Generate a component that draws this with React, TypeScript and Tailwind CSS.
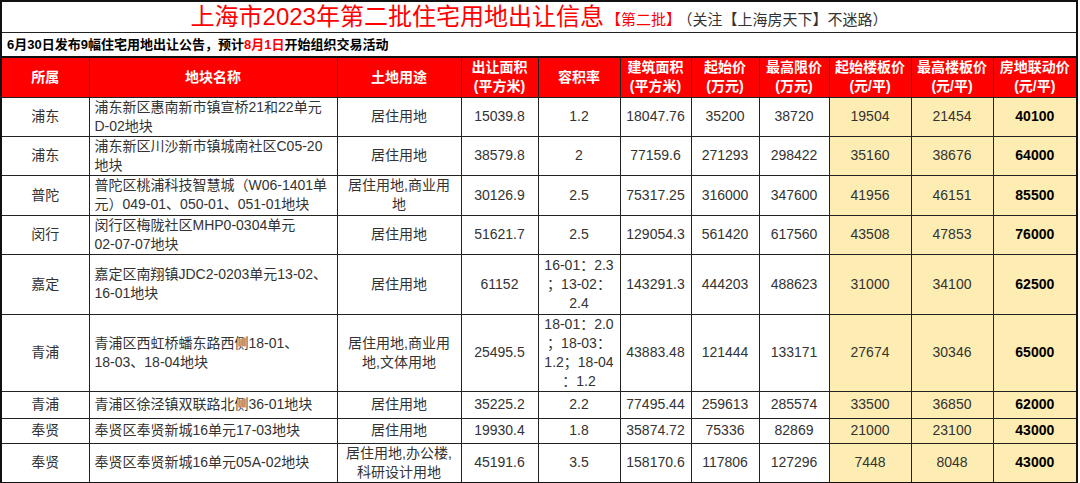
import React from "react";

type Row = {
  area: string;
  name: React.ReactNode;
  use: React.ReactNode;
  size: string;
  ratio: React.ReactNode;
  build: string;
  start: string;
  max: string;
  floorStart: string;
  floorMax: string;
  linked: string;
  h: string;
};

const rows: Row[] = [
  {
    area: "浦东",
    name: (<>浦东新区惠南新市镇宣桥21和22单元<br />D-02地块</>),
    use: "居住用地",
    size: "15039.8",
    ratio: "1.2",
    build: "18047.76",
    start: "35200",
    max: "38720",
    floorStart: "19504",
    floorMax: "21454",
    linked: "40100",
    h: "h-[38px]",
  },
  {
    area: "浦东",
    name: (<>浦东新区川沙新市镇城南社区C05-20<br />地块</>),
    use: "居住用地",
    size: "38579.8",
    ratio: "2",
    build: "77159.6",
    start: "271293",
    max: "298422",
    floorStart: "35160",
    floorMax: "38676",
    linked: "64000",
    h: "h-[39px]",
  },
  {
    area: "普陀",
    name: (<>普陀区桃浦科技智慧城（W06-1401单<br />元）049-01、050-01、051-01地块</>),
    use: (<>居住用地,商业用<br />地</>),
    size: "30126.9",
    ratio: "2.5",
    build: "75317.25",
    start: "316000",
    max: "347600",
    floorStart: "41956",
    floorMax: "46151",
    linked: "85500",
    h: "h-[40px]",
  },
  {
    area: "闵行",
    name: (<>闵行区梅陇社区MHP0-0304单元<br />02-07-07地块</>),
    use: "居住用地",
    size: "51621.7",
    ratio: "2.5",
    build: "129054.3",
    start: "561420",
    max: "617560",
    floorStart: "43508",
    floorMax: "47853",
    linked: "76000",
    h: "h-[39px]",
  },
  {
    area: "嘉定",
    name: (<>嘉定区南翔镇JDC2-0203单元13-02、<br />16-01地块</>),
    use: "居住用地",
    size: "61152",
    ratio: (<>16-01：2.3<br />；13-02：<br />2.4</>),
    build: "143291.3",
    start: "444203",
    max: "488623",
    floorStart: "31000",
    floorMax: "34100",
    linked: "62500",
    h: "h-[60px]",
  },
  {
    area: "青浦",
    name: (<>青浦区西虹桥蟠东路西侧18-01、<br />18-03、18-04地块</>),
    use: (<>居住用地,商业用<br />地,文体用地</>),
    size: "25495.5",
    ratio: (<>18-01：2.0<br />；18-03：<br />1.2；18-04<br />：1.2</>),
    build: "43883.48",
    start: "121444",
    max: "133171",
    floorStart: "27674",
    floorMax: "30346",
    linked: "65000",
    h: "h-[77px]",
  },
  {
    area: "青浦",
    name: "青浦区徐泾镇双联路北侧36-01地块",
    use: "居住用地",
    size: "35225.2",
    ratio: "2.2",
    build: "77495.44",
    start: "259613",
    max: "285574",
    floorStart: "33500",
    floorMax: "36850",
    linked: "62000",
    h: "h-[27px]",
  },
  {
    area: "奉贤",
    name: "奉贤区奉贤新城16单元17-03地块",
    use: "居住用地",
    size: "19930.4",
    ratio: "1.8",
    build: "35874.72",
    start: "75336",
    max: "82869",
    floorStart: "21000",
    floorMax: "23100",
    linked: "43000",
    h: "h-[25px]",
  },
  {
    area: "奉贤",
    name: "奉贤区奉贤新城16单元05A-02地块",
    use: (<>居住用地,办公楼,<br />科研设计用地</>),
    size: "45191.6",
    ratio: "3.5",
    build: "158170.6",
    start: "117806",
    max: "127296",
    floorStart: "7448",
    floorMax: "8048",
    linked: "43000",
    h: "h-[39px]",
  },
];

const headers: React.ReactNode[] = [
  "所属",
  "地块名称",
  "土地用途",
  (<>出让面积<br />(平方米)</>),
  "容积率",
  (<>建筑面积<br />(平方米)</>),
  (<>起始价<br />(万元)</>),
  (<>最高限价<br />(万元)</>),
  (<>起始楼板价<br />(元/平)</>),
  (<>最高楼板价<br />(元/平)</>),
  (<>房地联动价<br />(元/平)</>),
];

const widths = [88, 248, 124, 77, 82, 71, 68, 70, 82, 82, 84];

const cell = "border border-[#222] text-center align-middle px-0 leading-[19px]";
const yellow = "bg-[#fdedb2]";

export default function App() {
  return (
    <div className="w-[1080px] h-[483px] bg-white font-['Liberation_Sans','Noto_Sans_CJK_SC',sans-serif] text-[14px] text-[#333]">
      <table className="table-fixed border-collapse border-2 border-[#111] w-[1078px]">
        <colgroup>
          {widths.map((w, i) => (
            <col key={i} style={{ width: w }} />
          ))}
        </colgroup>
        <tbody>
          <tr className="h-[31px]">
            <td colSpan={11} className="border border-[#222] text-center align-middle">
              <span className="text-[24px] text-[#ff0000] leading-[28px]">上海市2023年第二批住宅用地出让信息</span>
              <span className="text-[15px] text-[#ff0000] ml-[2px]">【第二批】</span>
              <span className="text-[15px] text-[#333] ml-1">（关注【上海房天下】不迷路）</span>
            </td>
          </tr>
          <tr className="h-[25px]">
            <td colSpan={11} className="border border-[#222] border-b-2 border-b-[#111] text-left align-middle pl-[5px] text-[13px] font-bold text-black">
              6月30日发布9幅住宅用地出让公告，预计<span className="text-[#ff0000]">8月1日</span>开始组织交易活动
            </td>
          </tr>
          <tr className="h-[40px] bg-[#ff0000]">
            {headers.map((h, i) => (
              <td key={i} className={`${cell} text-white font-bold text-[14px]`}>
                {h}
              </td>
            ))}
          </tr>
          {rows.map((r, i) => (
            <tr key={i} className={r.h}>
              <td className={cell}>{r.area}</td>
              <td className={`${cell} text-left pl-[5px] whitespace-nowrap`}>{r.name}</td>
              <td className={cell}>{r.use}</td>
              <td className={cell}>{r.size}</td>
              <td className={cell}>{r.ratio}</td>
              <td className={cell}>{r.build}</td>
              <td className={cell}>{r.start}</td>
              <td className={cell}>{r.max}</td>
              <td className={`${cell} ${yellow}`}>{r.floorStart}</td>
              <td className={`${cell} ${yellow}`}>{r.floorMax}</td>
              <td className={`${cell} ${yellow} font-bold text-black`}>{r.linked}</td>
            </tr>
          ))}
        </tbody>
      </table>
    </div>
  );
}
